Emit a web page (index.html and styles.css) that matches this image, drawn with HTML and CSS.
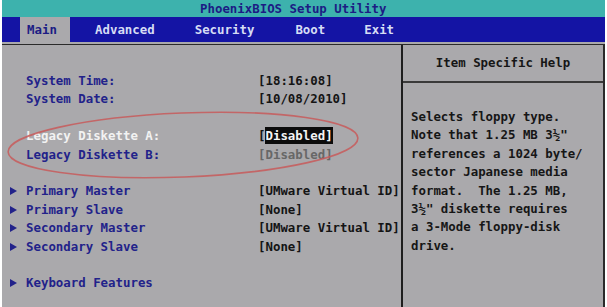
FILE: index.html
```html
<!DOCTYPE html>
<html>
<head>
<meta charset="utf-8">
<link rel="stylesheet" href="styles.css">
</head>
<body>
<div class="screen">
  <div class="title">PhoenixBIOS Setup Utility</div>
  <div class="menu">
    <span class="tab active">Main</span>
    <span class="tab t-adv">Advanced</span>
    <span class="tab t-sec">Security</span>
    <span class="tab t-boot">Boot</span>
    <span class="tab t-exit">Exit</span>
  </div>
  <div class="gap"></div>
  <div class="panels">
    <div class="left">
      <div class="row"><span class="lbl">System Time:</span><span class="val">[18:16:08]</span></div>
      <div class="row"><span class="lbl">System Date:</span><span class="val">[10/08/2010]</span></div>
      <div class="row blank"></div>
      <div class="row"><span class="lbl white">Legacy Diskette A:</span><span class="val">[<span class="sel">Disabled]</span></span></div>
      <div class="row"><span class="lbl">Legacy Diskette B:</span><span class="val dim">[Disabled]</span></div>
      <div class="row blank"></div>
      <div class="row sub"><span class="arrow"></span><span class="lbl">Primary Master</span><span class="val">[UMware Virtual ID]</span></div>
      <div class="row sub"><span class="arrow"></span><span class="lbl">Primary Slave</span><span class="val">[None]</span></div>
      <div class="row sub"><span class="arrow"></span><span class="lbl">Secondary Master</span><span class="val">[UMware Virtual ID]</span></div>
      <div class="row sub"><span class="arrow"></span><span class="lbl">Secondary Slave</span><span class="val">[None]</span></div>
      <div class="row blank"></div>
      <div class="row sub"><span class="arrow"></span><span class="lbl">Keyboard Features</span></div>
    </div>
    <div class="right">
      <div class="help-head">Item Specific Help</div>
      <div class="help-body">
        <div class="line">Selects floppy type.</div>
        <div class="line">Note that 1.25 MB 3½"</div>
        <div class="line">references a 1024 byte/</div>
        <div class="line">sector Japanese media</div>
        <div class="line">format.  The 1.25 MB,</div>
        <div class="line">3½" diskette requires</div>
        <div class="line">a 3-Mode floppy-disk</div>
        <div class="line">drive.</div>
      </div>
    </div>
  </div>
  <svg class="circle" width="607" height="307" viewBox="0 0 607 307">
    <ellipse cx="183" cy="145" rx="175" ry="32" transform="rotate(-2.3 183 145)" fill="none" stroke="#c85a5a" stroke-width="1.6" stroke-opacity="0.85"/>
  </svg>
</div>
</body>
</html>
```
FILE: styles.css
```css
html, body {
  margin: 0;
  padding: 0;
  background: #ffffff;
}
.screen {
  position: relative;
  width: 603px;
  height: 307px;
  margin-left: 2px;
  background: #aaa9ac;
  font-family: "DejaVu Sans Mono", "Liberation Mono", monospace;
  font-weight: bold;
  font-size: 12.4px;
  overflow: hidden;
}
.title {
  height: 17px;
  line-height: 17px;
  background: #3db2ad;
  color: #1c1c84;
  padding-left: 198px;
  white-space: pre;
}
.menu {
  height: 25px;
  background: #1414a4;
  display: flex;
  align-items: stretch;
}
.tab {
  color: #d6dcf4;
  line-height: 25px;
  white-space: pre;
}
.tab.active {
  background: #aaa9ac;
  color: #1c1c84;
  margin-left: 18px;
  width: 43px;
  padding-left: 7px;
}
.t-adv { margin-left: 25px; }
.t-sec { margin-left: 40px; }
.t-boot { margin-left: 41px; }
.t-exit { margin-left: 39px; }
.gap {
  height: 2px;
}
.panels {
  display: grid;
  grid-template-columns: 399px 1fr;
  border-top: 1px solid #2a2a2a;
  height: 263px;
}
.left {
  padding-top: 27px;
  padding-left: 8px;
}
.row {
  height: 18.4px;
  line-height: 18.4px;
  display: flex;
}
.lbl {
  box-sizing: border-box;
  color: #22228a;
  width: 248px;
  padding-left: 16px;
  white-space: pre;
}
.sub .lbl {
  width: 235px;
  padding-left: 3px;
}
.lbl.white {
  color: #f2f2f2;
}
.val {
  color: #141414;
  white-space: pre;
}
.val.dim {
  color: #676767;
}
.sel {
  background: #0c0c0c;
  color: #f4f4f4;
  padding: 1px 0;
}
.arrow {
  flex: none;
  width: 0;
  height: 0;
  margin-top: 5px;
  margin-left: 0;
  margin-right: 6px;
  border-top: 4px solid transparent;
  border-bottom: 4px solid transparent;
  border-left: 7px solid #22228a;
}
.right {
  border-left: 2px solid #1e1e1e;
  border-right: 2px solid #2a2a2a;
  display: flex;
  flex-direction: column;
}
.help-head {
  height: 36px;
  line-height: 36px;
  text-align: center;
  color: #161616;
  border-bottom: 2px solid #3a3a3a;
}
.help-body {
  padding-top: 25px;
  padding-left: 8px;
  color: #161616;
}
.line {
  height: 18.4px;
  line-height: 18.4px;
  white-space: pre;
}
.circle {
  position: absolute;
  left: -2px;
  top: 0;
  pointer-events: none;
}
```
